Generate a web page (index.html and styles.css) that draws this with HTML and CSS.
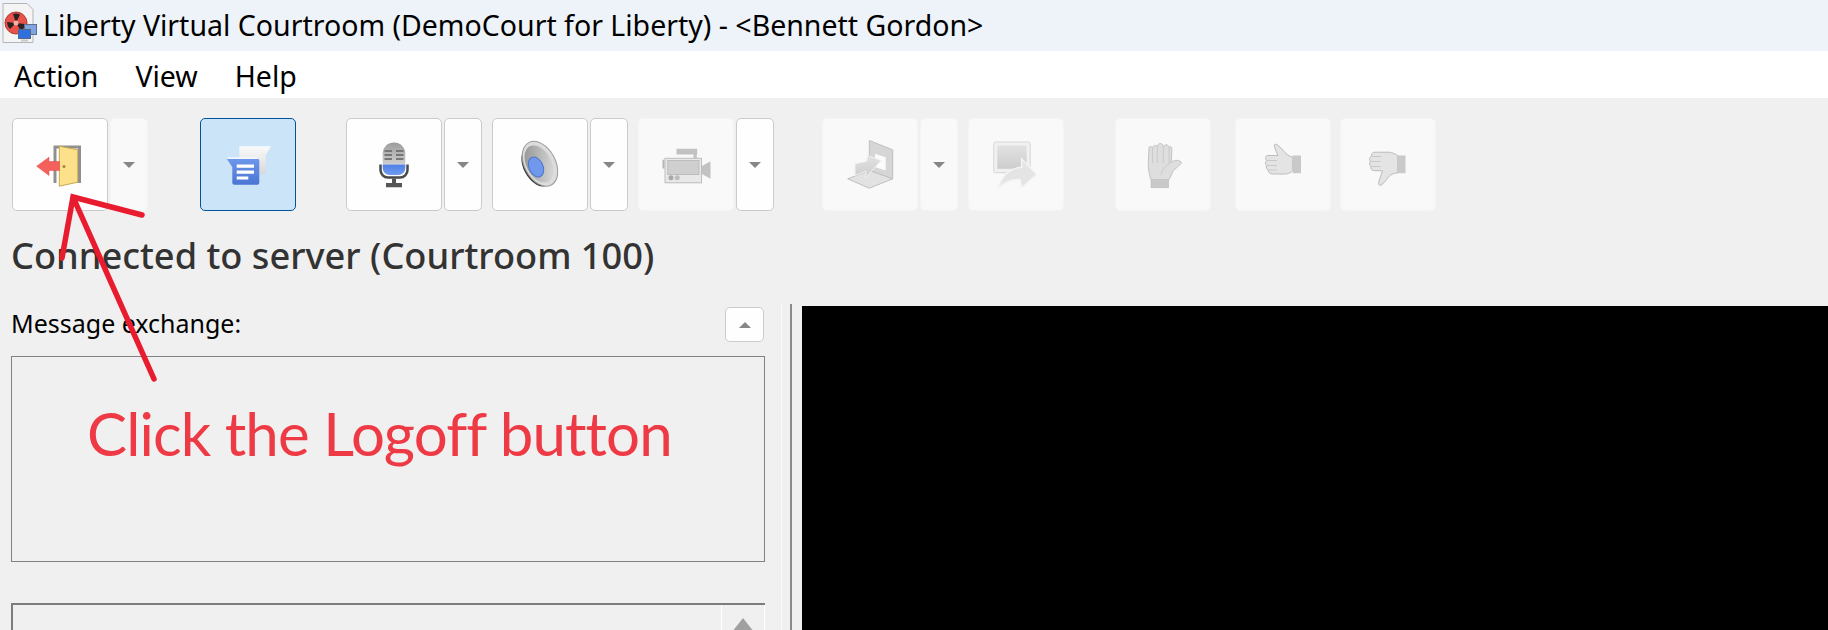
FILE: index.html
```html
<!DOCTYPE html>
<html lang="en">
<head>
  <meta charset="UTF-8">
  <title>Liberty Virtual Courtroom</title>
  <link rel="stylesheet" href="styles.css">
</head>
<body>
  <!-- shared gradients -->
  <svg class="defs" width="0" height="0">
    <defs>
      <linearGradient id="micGrey" x1="0" y1="0" x2="0" y2="1"><stop offset="0" stop-color="#9c9c9c"/><stop offset="1" stop-color="#cfcfcf"/></linearGradient>
      <linearGradient id="micBlue" x1="0" y1="0" x2="0" y2="1"><stop offset="0" stop-color="#4f80e6"/><stop offset="1" stop-color="#6f9bf0"/></linearGradient>
      <linearGradient id="chatBlue" x1="0" y1="0" x2="0" y2="1"><stop offset="0" stop-color="#6d97ec"/><stop offset="1" stop-color="#4b75d2"/></linearGradient>
      <linearGradient id="paper" x1="0" y1="0" x2="0" y2="1"><stop offset="0" stop-color="#fafafa"/><stop offset="1" stop-color="#d8d8d8"/></linearGradient>
      <linearGradient id="cone" x1="0" y1="0" x2="1" y2="1"><stop offset="0" stop-color="#8d8d8d"/><stop offset="1" stop-color="#e2e2e2"/></linearGradient>
      <linearGradient id="offGrey" x1="0" y1="0" x2="0" y2="1"><stop offset="0" stop-color="#e2e2e2"/><stop offset="1" stop-color="#cdcdcd"/></linearGradient>
    </defs>
  </svg>

  <div class="window">
    <header class="titlebar">
      <svg class="app-icon" width="43" height="51" viewBox="0 0 43 51">
        <path d="M3 3.500h24l6 6v33H3z" fill="#f4f4f4" stroke="#b5b5b5"/>
        <circle cx="16" cy="23" r="11" fill="#e8524a" stroke="#b03a34"/>
        <path d="M16 23l-3-9a9.500 9.500 0 0 1 7 .5zM16 23l9 1a9.500 9.500 0 0 1-4 7zM16 23l-6 6a9.500 9.500 0 0 1-3-7z" fill="#2b2222"/>
        <circle cx="16" cy="23" r="2.500" fill="#f2b0a8"/>
        <rect x="24.500" y="24.500" width="12" height="10" fill="#7fa4e0" stroke="#5d6f8c"/>
        <rect x="18.500" y="29.500" width="12" height="9" fill="#2f6fe0" stroke="#53688a"/>
        <path d="M21 39.500h7v2h-7z" fill="#c9c9c9"/>
      </svg>
      <span class="title-text">Liberty Virtual Courtroom (DemoCourt for Liberty) - &lt;Bennett Gordon&gt;</span>
    </header>

    <nav class="menubar">
      <span class="menu-item">Action</span>
      <span class="menu-item">View</span>
      <span class="menu-item">Help</span>
    </nav>

    <div class="toolbar">
      <div class="tool-group">
        <button class="tool">
          <svg class="icon" viewBox="0 0 64 64">
            <path d="M25.500 50V12.500h27.500V50h-3V15.500H28.500V50z" fill="#8f8f8f"/>
            <path d="M31.300 13.200l18.400 3.600v32.400l-18.400 4z" fill="#fde08a" stroke="#c9a94e"/>
            <circle cx="36" cy="33.500" r="1.500" fill="#a08a3c"/>
            <path d="M8.700 33.200L21 24.200v4.300h10.500v9H21v5z" fill="#f4605c" stroke="#e5484a" stroke-width=".5"/>
          </svg>
        </button>
        <button class="drop off"><span class="caret"></span></button>
      </div>

      <div class="tool-group gap-52">
        <button class="tool active">
          <svg class="icon" viewBox="0 0 64 64">
            <path d="M23.300 13.200H55l-5.300 9.300V39a2 2 0 0 1-2 2H25.300a2 2 0 0 1-2-2z" fill="url(#paper)"/>
            <path d="M10.700 25.800h30.600a2 2 0 0 1 2 2v22a2 2 0 0 1-2 2H18.300a2 2 0 0 1-2-2V34z" fill="url(#chatBlue)"/>
            <path d="M10.700 25.800h30.600v-1.200H12z" fill="#fff"/>
            <path d="M20.700 31.500H38v3.300H20.700zM20.700 37.500H38v3.300H20.700zM20.700 43.500h11.600v3H20.700z" fill="#fff"/>
          </svg>
        </button>
      </div>

      <div class="tool-group gap-50">
        <button class="tool">
          <svg class="icon" viewBox="0 0 64 64">
            <path d="M18.500 31.500V37a7.500 7.500 0 0 0 7.500 7.500h12a7.500 7.500 0 0 0 7.500-7.500v-5.500" fill="none" stroke="#4a4a4a" stroke-width="2.500"/>
            <path d="M20.700 31.500V20.500a11.300 11 0 0 1 22.600 0v11z" fill="url(#micGrey)"/>
            <path d="M20.700 31.500h22.600V35a7 7 0 0 1-7 7h-8.600a7 7 0 0 1-7-7z" fill="url(#micBlue)"/>
            <path d="M22.500 17h7.500v2h-7.500zM34 17h7.500v2H34zM22.500 21h7.500v2h-7.500zM34 21h7.500v2H34zM22.500 25h7.500v2h-7.500zM34 25h7.500v2H34z" fill="#777"/>
            <path d="M30 45.500h4V50h6v4.200H24V50h6z" fill="#555"/>
          </svg>
        </button>
        <button class="drop"><span class="caret"></span></button>
      </div>

      <div class="tool-group gap-10">
        <button class="tool">
          <svg class="icon" viewBox="0 0 64 64">
            <ellipse cx="29.500" cy="33" rx="14" ry="22" transform="rotate(-28 29.500 33)" fill="#3b3b3b"/>
            <ellipse cx="32" cy="30.800" rx="15.500" ry="24" transform="rotate(-28 32 30.800)" fill="#dcdcdc" stroke="#9a9a9a"/>
            <ellipse cx="31" cy="31" rx="12.500" ry="20" transform="rotate(-28 31 31)" fill="url(#cone)"/>
            <ellipse cx="28" cy="34" rx="7" ry="10.500" transform="rotate(-25 28 34)" fill="#7098ec" stroke="#4f74c8"/>
          </svg>
        </button>
        <button class="drop"><span class="caret"></span></button>
      </div>

      <div class="tool-group gap-10">
        <button class="tool off">
          <svg class="icon" viewBox="0 0 64 64">
            <path d="M22.500 15.800h20.700v5.700H22.500zM39.500 21.500h3.300v3.500h-3.300z" fill="#c2c2c2"/>
            <rect x="8.500" y="26.800" width="2" height="8.700" fill="#b5b5b5"/>
            <rect x="11" y="25.300" width="36.500" height="24.500" fill="#e8e8e8" stroke="#bdbdbd"/>
            <rect x="13.800" y="27.500" width="31.200" height="14" fill="#cfcfcf" stroke="#bdbdbd"/>
            <path d="M48 33l8.500-4.800V45.800L48 41z" fill="#c2c2c2"/>
            <circle cx="17" cy="44.800" r="2.500" fill="#a8a8a8"/>
            <circle cx="23.200" cy="44.800" r="2.500" fill="#bcbcbc"/>
          </svg>
        </button>
        <button class="drop"><span class="caret"></span></button>
      </div>

      <div class="tool-group gap-48">
        <button class="tool off">
          <svg class="icon" viewBox="0 0 64 64">
            <path d="M31.300 7.500l23.400 9.300v29L31.300 37.500z" fill="#d6d6d6" stroke="#c0c0c0"/>
            <path d="M37 20.800l10.700 3.400v13.300L37 34z" fill="#fbfbfb"/>
            <path d="M9.700 45.800l21.600-8.300 23.400 8.300-23.400 9.400z" fill="#e2e2e2" stroke="#c0c0c0"/>
            <path d="M17 30.800l11.700-2.600 1-5.700L43 27.500 27.700 44.800l.3-6.600-11 4.300z" fill="url(#offGrey)" stroke="#f1f1f1"/>
          </svg>
        </button>
        <button class="drop off"><span class="caret"></span></button>
      </div>

      <div class="tool-group gap-10">
        <button class="tool off">
          <svg class="icon" viewBox="0 0 64 64">
            <rect x="9.800" y="9" width="36.400" height="30.700" rx="1.500" fill="#f1f1f1" stroke="#d6d6d6"/>
            <rect x="13.300" y="12.500" width="29.400" height="23.300" fill="url(#offGrey)"/>
            <path d="M52.700 41.500L37.700 25.800v8.400C25 35 17 44 14.300 55.200 21 48.500 28 46 36 46.500l1.700 8.300z" fill="#e4e4e4" stroke="#f4f4f4" stroke-width="1.500"/>
          </svg>
        </button>
      </div>

      <div class="tool-group gap-51">
        <button class="tool off">
          <svg class="icon" viewBox="0 0 64 64">
            <path d="M20 47c-2-6-3-12-2.700-19.500L18 15c.3-2 3-2 3.500 0 .3-3 4-3.500 4.800-1 .3-4.500 5.500-5 6 0 .8-3 5.500-3 5.800.5.3-1.500 2.800-1.300 2.800 1L40.300 29c2.500-1.500 6-2.800 9.700-.2.600.6.400 1.500-.3 2.200L42 38c-1 3-2.500 6-4.300 9z" fill="#dedede" stroke="#c4c4c4"/>
            <path d="M21.500 15v15M26.300 14v16M32.300 13v17M38.100 15v15M30 42c1-5 4-9 10.300-13" fill="none" stroke="#cacaca"/>
            <rect x="20" y="46.800" width="17.700" height="8" fill="#c9c9c9" stroke="#bcbcbc" stroke-width=".5"/>
          </svg>
        </button>
      </div>

      <div class="tool-group gap-24">
        <button class="tool off">
          <svg class="icon" viewBox="0 0 64 64">
            <path d="M41.700 24c-4-.5-7-3.500-10-7-2.500-3-5-5.500-7.500-6-1.200.5-1 2.500 0 5l2.800 6.500H17c-3 0-3 4-1.300 5-2 1.500-1.500 4 0 5-1.200 2 0 4 1.500 4.500 0 2.500 2 4 4.500 4h12c3 0 5.500-1 8-3z" fill="#e4e4e4" stroke="#bcbcbc"/>
            <path d="M16 27.500h10M16 32.500h10M17 37h9" fill="none" stroke="#c8c8c8"/>
            <rect x="41.700" y="22.500" width="8.300" height="17.700" fill="#c9c9c9"/>
          </svg>
        </button>
      </div>

      <div class="tool-group gap-9">
        <button class="tool off">
          <svg class="icon" viewBox="0 0 64 64">
            <path d="M41.800 22.500c-3.500-2-6-3.300-10-3.300H19c-2.500 0-4 1.800-3.500 4-2 .8-2.500 3.500-1 5-1.500 1.500-1 4 .5 5-.8 2.500.8 4.500 3 4.500h8.500L23 48c-.8 2.500-.3 4 1.200 4.500 2.500-1 5.500-4.500 8-8 2.500-3 5-4.500 9.600-4.500z" fill="#e4e4e4" stroke="#bcbcbc"/>
            <path d="M16 23.500h9M15 28.500h10M15.500 33.500h9" fill="none" stroke="#c8c8c8"/>
            <rect x="41.800" y="22.500" width="7.700" height="17.700" fill="#c9c9c9"/>
          </svg>
        </button>
      </div>
    </div>

    <h1 class="status">Connected to server (Courtroom 100)</h1>

    <div class="main">
      <section class="left-panel">
        <div class="panel-head">
          <span class="panel-label">Message exchange:</span>
          <button class="drop up"><span class="caret"></span></button>
        </div>
        <div class="msg-box"></div>
        <div class="input-box">
          <div class="input-scroll"><span class="scroll-arrow"></span></div>
        </div>
      </section>
      <div class="splitter"></div>
      <div class="video"></div>
    </div>
  </div>

  <!-- annotation on top of the screenshot -->
  <svg class="note-arrow" width="200" height="200" viewBox="0 0 200 200">
    <path d="M142 25L73 7 62 68M73 7l81 182" fill="none" stroke="#e81c2e" stroke-width="5.500" stroke-linecap="round" stroke-linejoin="miter"/>
  </svg>
  <div class="note-text">Click the Logoff button</div>
</body>
</html>
```

FILE: styles.css
```css
* { margin: 0; padding: 0; box-sizing: border-box; }
html, body {
  width: 1828px;
  height: 630px;
  overflow: hidden;
}
body {
  position: relative;
  font-family: 'Noto Sans', 'Open Sans', sans-serif;
  background-color: #f0f0f0;
  color: #000;
}
.defs { position: absolute; }
.window {
  display: flex;
  flex-direction: column;
  height: 630px;
}

.titlebar {
  display: flex;
  align-items: center;
  height: 51px;
  background-color: #eef3fa;
  font-size: 28.500px;
}
.app-icon { flex: none; }
.title-text { margin-bottom: 2px; }

.menubar {
  display: flex;
  gap: 37px;
  align-items: center;
  height: 47px;
  padding-left: 14px;
  padding-top: 2px;
  background-color: #fff;
  font-size: 28.500px;
}

.toolbar {
  display: flex;
  height: 93px;
  margin-top: 20px;
  padding-left: 12px;
}
.tool-group { display: flex; gap: 2px; }
.gap-9 { margin-left: 9px; }
.gap-10 { margin-left: 10px; }
.gap-24 { margin-left: 24px; }
.gap-48 { margin-left: 48px; }
.gap-50 { margin-left: 50px; }
.gap-51 { margin-left: 51px; }
.gap-52 { margin-left: 52px; }

.tool, .drop {
  display: flex;
  align-items: center;
  justify-content: center;
  background-color: #fefefe;
  border: 1px solid #cbcbcb;
  border-radius: 5px;
}
.tool { width: 96px; height: 93px; }
.drop { width: 38px; height: 93px; }
.tool.off, .drop.off {
  background-color: #f9f9f9;
  border-color: #f4f4f4;
}
.tool.active {
  background-color: #cce4f7;
  border-color: #005499;
}
.icon { width: 64px; height: 64px; display: block; flex: none; }
.caret {
  width: 0;
  height: 0;
  border-left: 6px solid transparent;
  border-right: 6px solid transparent;
  border-top: 6px solid #868686;
}

.status {
  margin: 19px 0 0 11px;
  height: 50px;
  font-size: 36.200px;
  line-height: 50px;
  font-weight: 500;
  color: #333;
}

.main {
  display: flex;
  flex: 1;
  min-height: 0;
  margin-top: 24px;
}
.left-panel {
  width: 754px;
  margin-left: 11px;
}
.panel-head {
  display: flex;
  justify-content: space-between;
  align-items: flex-start;
  height: 52px;
}
.panel-label {
  font-size: 25px;
  line-height: 30px;
  margin-top: 4px;
}
.drop.up {
  width: 39px;
  height: 35px;
  margin-top: 3px;
  margin-right: 1px;
}
.up .caret {
  border-top: none;
  border-bottom: 6px solid #868686;
}
.msg-box {
  height: 206px;
  border: 1px solid #828282;
}
.input-box {
  display: flex;
  justify-content: flex-end;
  height: 27px;
  margin-top: 41px;
  overflow: hidden;
  border-top: 2px solid #7d7d7d;
  border-left: 2px solid #7d7d7d;
}
.input-scroll {
  display: flex;
  justify-content: center;
  width: 44px;
  padding-top: 13px;
  border-left: 1px solid #fff;
  border-right: 1px solid #fff;
}
.scroll-arrow {
  flex: none;
  width: 0;
  height: 0;
  border-left: 11px solid transparent;
  border-right: 11px solid transparent;
  border-bottom: 14px solid #a0a0a0;
}
.splitter {
  width: 11px;
  margin-left: 16px;
  border-left: 1px solid #fafafa;
  border-right: 2px solid #8a8a8a;
}
.video {
  flex: 1;
  margin-left: 10px;
  margin-top: 2px;
  background-color: #000;
}

.note-arrow {
  position: absolute;
  left: 0;
  top: 190px;
}
.note-text {
  position: absolute;
  left: 87px;
  top: 393px;
  font-family: 'Lato', sans-serif;
  font-size: 60px;
  line-height: 80px;
  letter-spacing: -0.900px;
  color: #ee3a44;
  white-space: nowrap;
}
```
